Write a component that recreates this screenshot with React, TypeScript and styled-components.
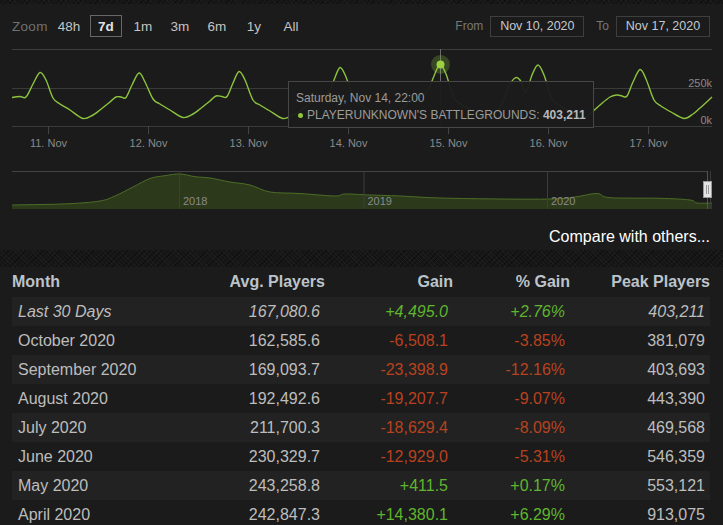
import React from "react";
import styled, { createGlobalStyle } from "styled-components";

const GlobalStyle = createGlobalStyle`
  html, body { margin: 0; padding: 0; background: #1b1b1b; }
  body { font-family: "Liberation Sans", Arial, sans-serif; }
  * { box-sizing: border-box; }
`;

const noise = `
  background-color: #161616;
  background-image:
    repeating-linear-gradient(45deg, rgba(255,255,255,0.03) 0 1px, transparent 1px 3px),
    repeating-linear-gradient(-45deg, rgba(0,0,0,0.3) 0 1px, transparent 1px 4px);
`;

const Page = styled.div`
  width: 723px;
  display: flex;
  flex-direction: column;
`;

const Strip = styled.div<{ $h: number }>`
  height: ${(p) => p.$h}px;
  ${noise}
`;

const Panel = styled.section`
  position: relative;
  background: #1b1b1b;
  display: flex;
  flex-direction: column;
`;

const Toolbar = styled.div`
  height: 44px;
  display: flex;
  align-items: center;
  justify-content: space-between;
  padding: 0 13px 0 12px;
`;

const Group = styled.div`
  display: flex;
  align-items: center;
`;

const ZoomLabel = styled.span`
  width: 41px;
  font-size: 13.5px;
  letter-spacing: 0.3px;
  color: #707070;
`;

const ButtonRow = styled.div`
  display: flex;
  gap: 5px;
`;

const RangeButton = styled.button<{ $active?: boolean }>`
  width: 32px;
  height: 22px;
  padding: 0;
  background: transparent;
  border: 1px solid ${(p) => (p.$active ? "#676767" : "transparent")};
  color: ${(p) => (p.$active ? "#e2e2e2" : "#c4c4c4")};
  font-family: "Liberation Sans", Arial, sans-serif;
  font-size: 13.5px;
  font-weight: ${(p) => (p.$active ? 700 : 400)};
  cursor: pointer;
`;

const DateLabel = styled.span<{ $ml?: number }>`
  font-size: 12px;
  color: #777;
  margin-left: ${(p) => p.$ml ?? 0}px;
  margin-right: 7px;
`;

const DateBox = styled.div`
  width: 94px;
  height: 21px;
  border: 1px solid #3e3e3e;
  display: flex;
  align-items: center;
  justify-content: center;
  font-size: 12.5px;
  color: #c3c9cf;
`;

const ChartSvg = styled.svg`
  display: block;
`;

const Tooltip = styled.div`
  position: absolute;
  left: 288px;
  top: 77px;
  width: 306px;
  height: 47px;
  padding: 8px 0 0 7px;
  background: rgba(27, 27, 27, 0.96);
  border: 1px solid #474747;
  font-size: 12px;
  line-height: 17px;
  color: #9c9c9c;
  white-space: nowrap;
`;

const TipDot = styled.span`
  display: inline-block;
  width: 5px;
  height: 5px;
  border-radius: 50%;
  background: #8dc63f;
  margin: 0 4px 1px 2px;
  vertical-align: middle;
`;

const TipValue = styled.b`
  color: #b9b9b9;
`;

const CompareRow = styled.div`
  height: 36px;
  display: flex;
  justify-content: flex-end;
  align-items: flex-end;
  padding: 0 13px 4px 0;
`;

const CompareLink = styled.a`
  font-size: 16px;
  line-height: 18px;
  color: #ffffff;
  text-decoration: none;
`;

const TablePanel = styled.div`
  background: #1b1b1b;
  padding: 0 13px 0 12px;
  display: flex;
  flex-direction: column;
`;

const cols = "190px 123px 128px 117px 1fr";

const HeaderRow = styled.div`
  display: grid;
  grid-template-columns: ${cols};
  height: 30px;
  align-items: center;
  font-size: 16px;
  font-weight: 700;
  color: #bcc3ca;
`;

const HeadCell = styled.div<{ $left?: boolean }>`
  text-align: ${(p) => (p.$left ? "left" : "right")};
`;

const DataRow = styled.div<{ $odd: boolean; $italic?: boolean }>`
  display: grid;
  grid-template-columns: ${cols};
  height: 29px;
  align-items: center;
  background: ${(p) => (p.$odd ? "#222222" : "#1b1b1b")};
  font-size: 16px;
  font-style: ${(p) => (p.$italic ? "italic" : "normal")};
  color: #bdbdbd;
`;

const Cell = styled.div<{ $left?: boolean; $tone?: "up" | "down" }>`
  text-align: ${(p) => (p.$left ? "left" : "right")};
  padding: ${(p) => (p.$left ? "0 0 0 6px" : "0 5px 0 0")};
  color: ${(p) => (p.$tone === "up" ? "#5fb52d" : p.$tone === "down" ? "#b8421f" : "inherit")};
`;

type Pt = [number, number];

function smoothPath(pts: Pt[]): string {
  let d = `M${pts[0][0]},${pts[0][1]}`;
  for (let i = 0; i < pts.length - 1; i++) {
    const p0 = pts[i - 1] || pts[i];
    const p1 = pts[i];
    const p2 = pts[i + 1];
    const p3 = pts[i + 2] || p2;
    const c1x = p1[0] + (p2[0] - p0[0]) / 6;
    const c1y = p1[1] + (p2[1] - p0[1]) / 6;
    const c2x = p2[0] - (p3[0] - p1[0]) / 6;
    const c2y = p2[1] - (p3[1] - p1[1]) / 6;
    d += ` C${c1x.toFixed(1)},${c1y.toFixed(1)} ${c2x.toFixed(1)},${c2y.toFixed(1)} ${p2[0]},${p2[1]}`;
  }
  return d;
}

const mainPts: Pt[] = [
  [12, 97.5], [20, 96.5], [26, 97], [33, 84], [40, 72.5], [46, 80], [53, 98], [60, 104], [70, 110], [83, 118.5],
  [93, 115], [100, 110], [110, 102], [116, 97], [121, 97], [126, 97.5], [132, 85], [139, 73], [145, 82], [153, 99],
  [160, 104], [170, 110], [183, 117.5], [193, 114], [200, 109], [210, 101], [216, 96], [222, 96.5], [227, 96.5],
  [233, 83], [239, 71.5], [245, 80], [253, 100], [260, 105], [270, 111], [283, 118.5], [293, 115], [300, 111],
  [310, 103], [316, 97], [322, 96], [328, 94], [334, 80], [340, 67.5], [346, 77], [354, 99], [361, 105], [371, 111],
  [384, 118], [394, 114], [401, 109], [411, 100], [417, 95], [423, 94], [428, 91], [434, 76], [440, 64.5], [446, 74],
  [454, 98], [461, 104], [471, 110], [484, 117], [494, 113], [501, 106], [508, 88], [515, 78], [520, 80], [526, 92],
  [532, 75], [538, 65], [544, 75], [552, 99], [559, 105], [569, 111], [582, 118], [592, 112], [600, 105], [610, 97],
  [617, 95], [622, 96], [627, 96], [633, 82], [640, 69.5], [646, 79], [654, 100], [661, 106], [671, 112], [684, 118.5],
  [693, 114], [700, 108], [712, 97],
];

const navPts: Pt[] = [
  [12, 205], [40, 204.5], [70, 203.7], [100, 201], [115, 196], [133, 187], [150, 178.5], [165, 175.7], [180, 174],
  [195, 176.7], [210, 178], [230, 182], [250, 185], [270, 192], [300, 193.5], [335, 196], [345, 194], [370, 195],
  [400, 196], [440, 198], [500, 199], [550, 199], [575, 197], [597, 193.5], [610, 197.7], [660, 198.3], [690, 200],
  [697, 203], [712, 203],
];

const dayTicks: { x: number; label: string }[] = [
  { x: 48.5, label: "11. Nov" },
  { x: 148.5, label: "12. Nov" },
  { x: 248.5, label: "13. Nov" },
  { x: 348.5, label: "14. Nov" },
  { x: 448.5, label: "15. Nov" },
  { x: 548.5, label: "16. Nov" },
  { x: 648.5, label: "17. Nov" },
];

const years = [
  { x: 179.5, label: "2018" },
  { x: 364, label: "2019" },
  { x: 547.5, label: "2020" },
];

function Chart() {
  const line = smoothPath(mainPts);
  const nav = smoothPath(navPts);
  return (
    <ChartSvg width={723} height={166} viewBox="0 48 723 166">
      <line x1={12} x2={712} y1={49.5} y2={49.5} stroke="#3c3c3c" />
      <line x1={12} x2={712} y1={88.5} y2={88.5} stroke="#3a3a3a" />
      <line x1={12} x2={712} y1={126.5} y2={126.5} stroke="#3a3a3a" />
      {dayTicks.map((t) => (
        <g key={t.label}>
          <line x1={t.x} x2={t.x} y1={126} y2={134} stroke="#444" />
          <text x={t.x} y={147} textAnchor="middle" fontSize={11} fill="#8a8a8a" fontFamily="Liberation Sans, Arial, sans-serif">
            {t.label}
          </text>
        </g>
      ))}
      <text x={712} y={86.5} textAnchor="end" fontSize={11} fill="#8a8a8a" fontFamily="Liberation Sans, Arial, sans-serif">250k</text>
      <text x={712} y={124} textAnchor="end" fontSize={11} fill="#8a8a8a" fontFamily="Liberation Sans, Arial, sans-serif">0k</text>
      <line x1={440.5} x2={440.5} y1={49} y2={126} stroke="#6a6a6a" />
      <path d={line} fill="none" stroke="#8cc43d" strokeWidth={1.4} strokeLinejoin="round" />
      <circle cx={440.5} cy={64.5} r={9.5} fill="rgba(141,198,63,0.25)" />
      <circle cx={440.5} cy={64.5} r={4} fill="#9ad13f" />
      <line x1={12} x2={707} y1={171.5} y2={171.5} stroke="#444" />
      <path d={`${nav} L712,209 L12,209 Z`} fill="rgba(80,120,30,0.34)" />
      <path d={nav} fill="none" stroke="#4d6d27" strokeWidth={1} />
      {years.map((y) => (
        <g key={y.label}>
          <line x1={y.x} x2={y.x} y1={171} y2={209} stroke="#3d3d3d" />
          <text x={y.x + 3.5} y={205} fontSize={11} fill="#8a8a8a" fontFamily="Liberation Sans, Arial, sans-serif">
            {y.label}
          </text>
        </g>
      ))}
      <line x1={707.5} x2={707.5} y1={171} y2={209} stroke="#555" />
      <line x1={710.5} x2={710.5} y1={171} y2={209} stroke="#3a3a3a" />
      <rect x={703.5} y={181.5} width={8} height={16} fill="#e4e4e4" stroke="#9a9a9a" />
      <line x1={706.5} x2={706.5} y1={185} y2={194} stroke="#9a9a9a" />
      <line x1={708.5} x2={708.5} y1={185} y2={194} stroke="#9a9a9a" />
    </ChartSvg>
  );
}

const ranges = ["48h", "7d", "1m", "3m", "6m", "1y", "All"];

type Row = { month: string; avg: string; gain: string; pct: string; peak: string; italic?: boolean };

const rows: Row[] = [
  { month: "Last 30 Days", avg: "167,080.6", gain: "+4,495.0", pct: "+2.76%", peak: "403,211", italic: true },
  { month: "October 2020", avg: "162,585.6", gain: "-6,508.1", pct: "-3.85%", peak: "381,079" },
  { month: "September 2020", avg: "169,093.7", gain: "-23,398.9", pct: "-12.16%", peak: "403,693" },
  { month: "August 2020", avg: "192,492.6", gain: "-19,207.7", pct: "-9.07%", peak: "443,390" },
  { month: "July 2020", avg: "211,700.3", gain: "-18,629.4", pct: "-8.09%", peak: "469,568" },
  { month: "June 2020", avg: "230,329.7", gain: "-12,929.0", pct: "-5.31%", peak: "546,359" },
  { month: "May 2020", avg: "243,258.8", gain: "+411.5", pct: "+0.17%", peak: "553,121" },
  { month: "April 2020", avg: "242,847.3", gain: "+14,380.1", pct: "+6.29%", peak: "913,075" },
];

export default function App() {
  return (
    <Page>
      <GlobalStyle />
      <Strip $h={4} />
      <Panel>
        <Toolbar>
          <Group>
            <ZoomLabel>Zoom</ZoomLabel>
            <ButtonRow>
              {ranges.map((r) => (
                <RangeButton key={r} $active={r === "7d"}>
                  {r}
                </RangeButton>
              ))}
            </ButtonRow>
          </Group>
          <Group>
            <DateLabel>From</DateLabel>
            <DateBox>Nov 10, 2020</DateBox>
            <DateLabel $ml={12}>To</DateLabel>
            <DateBox>Nov 17, 2020</DateBox>
          </Group>
        </Toolbar>
        <Chart />
        <Tooltip>
          <div>Saturday, Nov 14, 22:00</div>
          <div>
            <TipDot />
            PLAYERUNKNOWN'S BATTLEGROUNDS: <TipValue>403,211</TipValue>
          </div>
        </Tooltip>
        <CompareRow>
          <CompareLink href="#">Compare with others...</CompareLink>
        </CompareRow>
      </Panel>
      <Strip $h={17} />
      <TablePanel>
        <HeaderRow>
          <HeadCell $left>Month</HeadCell>
          <HeadCell>Avg. Players</HeadCell>
          <HeadCell>Gain</HeadCell>
          <HeadCell>% Gain</HeadCell>
          <HeadCell>Peak Players</HeadCell>
        </HeaderRow>
        {rows.map((r, i) => {
          const tone = r.gain.startsWith("+") ? "up" : "down";
          return (
            <DataRow key={r.month} $odd={i % 2 === 0} $italic={r.italic}>
              <Cell $left>{r.month}</Cell>
              <Cell>{r.avg}</Cell>
              <Cell $tone={tone}>{r.gain}</Cell>
              <Cell $tone={tone}>{r.pct}</Cell>
              <Cell>{r.peak}</Cell>
            </DataRow>
          );
        })}
      </TablePanel>
    </Page>
  );
}
